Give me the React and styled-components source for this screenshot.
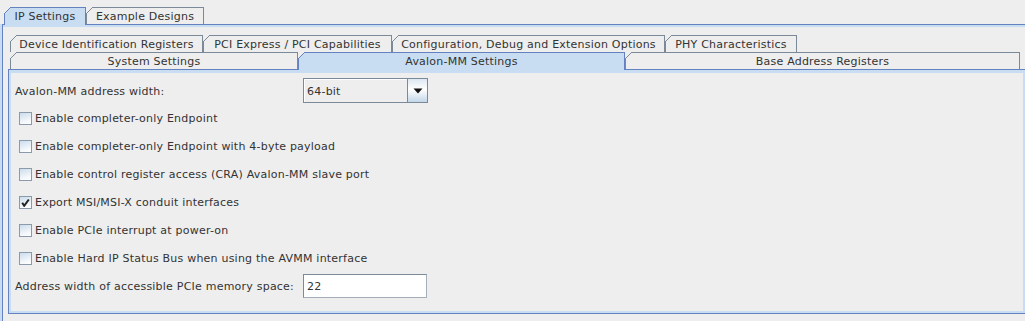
import React from "react";
import styled, { createGlobalStyle } from "styled-components";

const BLUE = "#6382bf";
const LIGHT = "#c8ddf2";
const GRAY = "#7a8a99";
const BG = "#eeeeee";
const TEXT = "#333333";

const Global = createGlobalStyle`
  html, body { margin: 0; padding: 0; background: ${BG}; overflow: hidden; }
  body {
    width: 1025px; height: 321px;
    font-family: "DejaVu Sans", "Liberation Sans", sans-serif;
    font-size: 11px; color: ${TEXT};
    letter-spacing: 0.22px;
  }
  * { box-sizing: border-box; }
`;

const Page = styled.div`
  padding-top: 7px;
  width: 1060px;
`;

const TabStrip = styled.div`
  display: flex;
  align-items: flex-end;
  padding-left: ${(p) => p.$indent || 0}px;
  position: relative;
  z-index: 2;
`;

const Tab = styled.div`
  position: relative;
  flex: none;
  width: ${(p) => p.$w}px;
  height: ${(p) => (p.$selected ? 18 : 17)}px;
  margin-bottom: ${(p) => (p.$selected ? -1 : 0)}px;
  padding-bottom: ${(p) => (p.$selected ? 1 : 0)}px;
  padding-top: 1px;
  border: 1px solid ${(p) => (p.$selected ? BLUE : GRAY)};
  border-bottom: none;
  background: ${(p) => (p.$selected ? LIGHT : BG)};
  display: flex;
  align-items: center;
  justify-content: center;
  white-space: nowrap;
  color: ${TEXT};
  &::before {
    content: "";
    position: absolute;
    left: -1px;
    top: -1px;
    width: 7px;
    height: 7px;
    background: linear-gradient(
      135deg,
      ${BG} 0 calc(50% - 0.6px),
      ${(p) => (p.$selected ? BLUE : GRAY)} calc(50% - 0.6px) calc(50% + 0.6px),
      transparent calc(50% + 0.6px)
    );
  }
`;

const OuterPanel = styled.div`
  margin-left: 2px;
  border-top: 1px solid ${BLUE};
  border-left: 1px solid ${BLUE};
  box-shadow: -2px 0 0 0 ${LIGHT};
  position: relative;
  z-index: 1;
`;

const OuterBody = styled.div`
  border-top: 2px solid ${LIGHT};
  padding: 8px 0 20px 5px;
`;

const InnerTabs = styled.div`
  display: flex;
  flex-direction: column;
  padding-left: 2px;
  position: relative;
  z-index: 2;
`;

const InnerPanel = styled.div`
  width: 1018px;
  border: 1px solid ${BLUE};
  position: relative;
  z-index: 1;
`;

const InnerBody = styled.div`
  border: 2px solid ${LIGHT};
  border-top-width: 3px;
  padding: 5px 0 13px 4px;
  display: flex;
  flex-direction: column;
`;

const FieldRow = styled.div`
  display: grid;
  grid-template-columns: 288px auto;
  align-items: center;
  height: ${(p) => p.$h}px;
  margin-top: ${(p) => p.$mt || 0}px;
`;

const Label = styled.span`
  white-space: nowrap;
  padding-top: 1px;
`;

const Combo = styled.div`
  display: flex;
  width: 125px;
  height: 25px;
  border: 1px solid ${GRAY};
  background: ${BG};
`;

const ComboValue = styled.div`
  flex: 1;
  display: flex;
  align-items: center;
  padding: 1px 0 0 3px;
  box-shadow: inset 1px 1px 0 #ffffff;
`;

const ComboArrow = styled.div`
  width: 20px;
  border-left: 1px solid ${GRAY};
  background: linear-gradient(#dde8f3, #ffffff 45%, #c3d6e9);
  display: flex;
  align-items: center;
  justify-content: center;
`;

const TextField = styled.div`
  width: 124px;
  height: 24px;
  background: #ffffff;
  border: 1px solid ${GRAY};
  border-right-color: #a3b0bc;
  border-bottom-color: #a3b0bc;
  display: flex;
  align-items: center;
  padding: 1px 0 0 3px;
`;

const CheckRow = styled.label`
  display: flex;
  align-items: center;
  height: 28px;
  padding-left: 4px;
  gap: 3px;
  margin-top: ${(p) => p.$mt || 0}px;
  white-space: nowrap;
`;

const CheckText = styled.span`
  padding-top: 1px;
`;

const Box = styled.span`
  width: 13px;
  height: 13px;
  flex: none;
  border: 1px solid #8a9aab;
  background: linear-gradient(160deg, #cbdcec, #f4f8fb 70%, #ffffff);
  display: flex;
  align-items: center;
  justify-content: center;
`;

const Check = () => (
  <svg width="9" height="9" viewBox="0 0 9 9">
    <path d="M1.2 4.8 L3.2 7.8 L7.8 1.5" fill="none" stroke="#222" strokeWidth="2" strokeLinejoin="miter" />
  </svg>
);

const Arrow = () => (
  <svg width="10" height="6" viewBox="0 0 10 6">
    <path d="M0.5 0.5 H9.5 L5 5.5 Z" fill="#111" />
  </svg>
);

const CheckItem = ({ checked, children, mt }) => (
  <CheckRow $mt={mt}>
    <Box>{checked && <Check />}</Box>
    <CheckText>{children}</CheckText>
  </CheckRow>
);

export default function App() {
  return (
    <>
      <Global />
      <Page>
        <TabStrip $indent={4}>
          <Tab $w={82} $selected>IP Settings</Tab>
          <Tab $w={118}>Example Designs</Tab>
        </TabStrip>
        <OuterPanel>
          <OuterBody>
            <InnerTabs>
              <TabStrip>
                <Tab $w={193}>Device Identification Registers</Tab>
                <Tab $w={189}>PCI Express / PCI Capabilities</Tab>
                <Tab $w={273}>Configuration, Debug and Extension Options</Tab>
                <Tab $w={132}>PHY Characteristics</Tab>
              </TabStrip>
              <TabStrip>
                <Tab $w={288}>System Settings</Tab>
                <Tab $w={327} $selected>Avalon-MM Settings</Tab>
                <Tab $w={395}>Base Address Registers</Tab>
              </TabStrip>
            </InnerTabs>
            <InnerPanel>
              <InnerBody>
                <FieldRow $h={25}>
                  <Label>Avalon-MM address width:</Label>
                  <Combo>
                    <ComboValue>64-bit</ComboValue>
                    <ComboArrow>
                      <Arrow />
                    </ComboArrow>
                  </Combo>
                </FieldRow>
                <CheckItem mt={1}>Enable completer-only Endpoint</CheckItem>
                <CheckItem>Enable completer-only Endpoint with 4-byte payload</CheckItem>
                <CheckItem>Enable control register access (CRA) Avalon-MM slave port</CheckItem>
                <CheckItem checked>Export MSI/MSI-X conduit interfaces</CheckItem>
                <CheckItem>Enable PCIe interrupt at power-on</CheckItem>
                <CheckItem>Enable Hard IP Status Bus when using the AVMM interface</CheckItem>
                <FieldRow $h={24} $mt={2}>
                  <Label>Address width of accessible PCIe memory space:</Label>
                  <TextField>22</TextField>
                </FieldRow>
              </InnerBody>
            </InnerPanel>
          </OuterBody>
        </OuterPanel>
      </Page>
    </>
  );
}
